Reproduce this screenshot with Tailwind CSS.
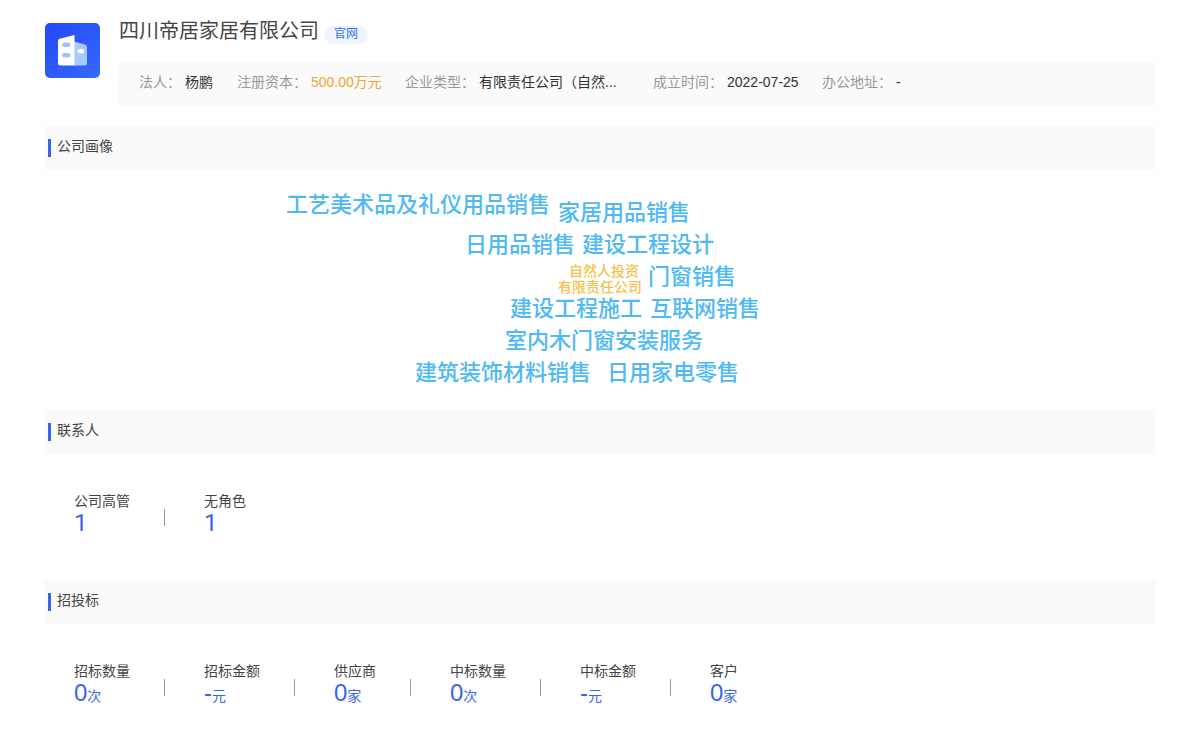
<!DOCTYPE html>
<html lang="zh-CN">
<head>
<meta charset="utf-8">
<title>四川帝居家居有限公司</title>
<script src="https://cdn.jsdelivr.net/npm/@tailwindcss/browser@4"></script>
</head>
<body class="bg-white px-11 font-['Liberation_Sans','Noto_Sans_CJK_SC',sans-serif] text-sm text-[#444]">
<header class="flex pt-[23px]">
  <svg class="ml-px size-[55px] shrink-0" viewBox="0 0 55 55" aria-hidden="true">
    <defs>
      <linearGradient id="tile" x1="0" y1="0" x2="1" y2="1"><stop offset="0" stop-color="#2448f8"/><stop offset="1" stop-color="#3569ff"/></linearGradient>
    </defs>
    <rect width="55" height="55" rx="5" fill="url(#tile)"/>
    <path d="M29 18.5 40 21.5Q42 22 42 24V40Q42 42.5 39.500 42.500H29Z" fill="#a3cbfb"/>
    <path d="M29.500 12V42.500H15.500Q13 42.500 13 40V18Q13 16.300 14.700 15.800Z" fill="#fff"/>
    <rect x="17" y="19.500" width="8.500" height="4.500" rx="2.250" fill="#a0c4f8"/>
    <rect x="17" y="30" width="8.500" height="4.500" rx="2.250" fill="#a0c4f8"/>
    <rect x="32.500" y="26" width="6.500" height="4.500" rx="2.250" fill="#fff"/>
  </svg>
  <div class="ml-[19px] min-w-0 flex-1">
    <div class="flex h-[39px] items-start gap-[5px]">
      <h1 class="-mt-1 text-xl leading-6">四川帝居家居有限公司</h1>
      <a href="#" class="mt-[3px] h-[18px] rounded-full bg-[#eef5fe] px-2.5 text-xs leading-4 text-[#3370e8]">官网</a>
    </div>
    <dl class="flex h-11 gap-6 bg-[#fafafa] px-5 leading-10 whitespace-nowrap">
      <div class="flex gap-1"><dt class="text-[#999]">法人：</dt><dd class="text-[#333]">杨鹏</dd></div>
      <div class="flex gap-1"><dt class="text-[#999]">注册资本：</dt><dd class="w-[70px] text-[#f0a432]">500.00万元</dd></div>
      <div class="flex gap-1"><dt class="text-[#999]">企业类型：</dt><dd class="w-[150px] text-[#333]">有限责任公司（自然...</dd></div>
      <div class="flex gap-1"><dt class="text-[#999]">成立时间：</dt><dd class="w-[71px] text-[#333]">2022-07-25</dd></div>
      <div class="flex gap-1"><dt class="text-[#999]">办公地址：</dt><dd class="text-[#333]">-</dd></div>
    </dl>
  </div>
</header>

<section class="mt-5">
  <div class="flex h-11 gap-1.5 bg-[#fafafa] pl-1"><span class="mt-[13px] h-[18px] w-[3px] bg-[#3766e8]"></span><h2 class="leading-10">公司画像</h2></div>
  <div class="relative mx-auto h-60 w-[600px] text-[22px] leading-8 font-medium whitespace-nowrap text-[#4eb9f5]">
    <span class="absolute top-[19px] left-[-14px]">工艺美术品及礼仪用品销售</span>
    <span class="absolute top-[27px] left-[258px]">家居用品销售</span>
    <span class="absolute top-[59px] left-[165px]">日用品销售</span>
    <span class="absolute top-[59px] left-[282px]">建设工程设计</span>
    <span class="absolute top-[93px] left-[269px] text-sm leading-4 text-[#f7c04c]">自然人投资</span>
    <span class="absolute top-[109px] left-[258px] text-sm leading-4 text-[#f7c04c]">有限责任公司</span>
    <span class="absolute top-[91px] left-[348px]">门窗销售</span>
    <span class="absolute top-[123px] left-[210px]">建设工程施工</span>
    <span class="absolute top-[123px] left-[350px]">互联网销售</span>
    <span class="absolute top-[155px] left-[205px]">室内木门窗安装服务</span>
    <span class="absolute top-[187px] left-[115px]">建筑装饰材料销售</span>
    <span class="absolute top-[187px] left-[307px]">日用家电零售</span>
  </div>
</section>

<section>
  <div class="flex h-11 gap-1.5 bg-[#fafafa] pl-1"><span class="mt-[13px] h-[18px] w-[3px] bg-[#3766e8]"></span><h2 class="leading-10">联系人</h2></div>
  <ul class="flex h-[126px] items-start px-[30px] pt-[37px]">
    <li><p class="leading-5">公司高管</p><p class="font-[Roboto,sans-serif] text-2xl leading-6 text-[#3766e8]">1</p></li>
    <li class="mt-[18px] mr-[39px] ml-[34px] h-[17px] w-px bg-[#999]" role="separator"></li>
    <li><p class="leading-5">无角色</p><p class="font-[Roboto,sans-serif] text-2xl leading-6 text-[#3766e8]">1</p></li>
  </ul>
</section>

<section>
  <div class="flex h-11 gap-1.5 bg-[#fafafa] pl-1"><span class="mt-[13px] h-[18px] w-[3px] bg-[#3766e8]"></span><h2 class="leading-10">招投标</h2></div>
  <ul class="flex items-start px-[30px] pt-[37px]">
    <li><p class="leading-5">招标数量</p><p class="text-2xl leading-6 text-[#3766e8]">0<span class="text-sm leading-4">次</span></p></li>
    <li class="mt-[18px] mr-[39px] ml-[34px] h-[17px] w-px bg-[#999]" role="separator"></li>
    <li><p class="leading-5">招标金额</p><p class="text-2xl leading-6 text-[#3766e8]">-<span class="text-sm leading-4">元</span></p></li>
    <li class="mt-[18px] mr-[39px] ml-[34px] h-[17px] w-px bg-[#999]" role="separator"></li>
    <li><p class="leading-5">供应商</p><p class="text-2xl leading-6 text-[#3766e8]">0<span class="text-sm leading-4">家</span></p></li>
    <li class="mt-[18px] mr-[39px] ml-[34px] h-[17px] w-px bg-[#999]" role="separator"></li>
    <li><p class="leading-5">中标数量</p><p class="text-2xl leading-6 text-[#3766e8]">0<span class="text-sm leading-4">次</span></p></li>
    <li class="mt-[18px] mr-[39px] ml-[34px] h-[17px] w-px bg-[#999]" role="separator"></li>
    <li><p class="leading-5">中标金额</p><p class="text-2xl leading-6 text-[#3766e8]">-<span class="text-sm leading-4">元</span></p></li>
    <li class="mt-[18px] mr-[39px] ml-[34px] h-[17px] w-px bg-[#999]" role="separator"></li>
    <li><p class="leading-5">客户</p><p class="text-2xl leading-6 text-[#3766e8]">0<span class="text-sm leading-4">家</span></p></li>
  </ul>
</section>
</body>
</html>
